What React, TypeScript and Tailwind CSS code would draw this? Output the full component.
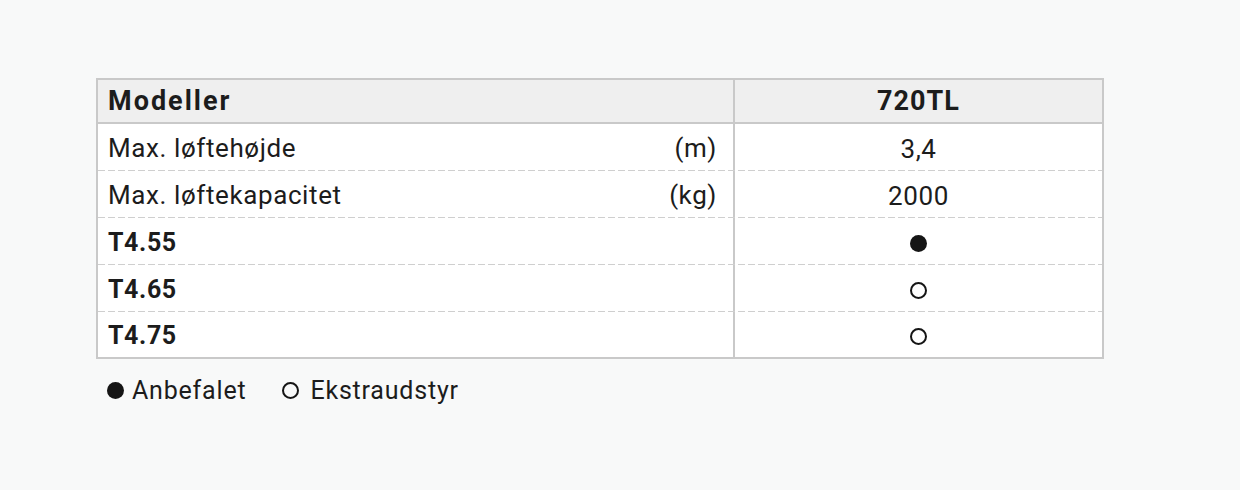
const rows = [
  { label: "Max. løftehøjde", unit: "(m)", value: "3,4", bold: false },
  { label: "Max. løftekapacitet", unit: "(kg)", value: "2000", bold: false },
  { label: "T4.55", unit: "", value: "full", bold: true },
  { label: "T4.65", unit: "", value: "empty", bold: true },
  { label: "T4.75", unit: "", value: "empty", bold: true },
]

function Dot({ filled }: { filled: boolean }) {
  return filled ? (
    <span className="inline-block w-[17px] h-[17px] rounded-full bg-[#151515]" />
  ) : (
    <span className="inline-block w-[17px] h-[17px] rounded-full border-2 border-[#151515]" />
  )
}

function App() {
  return (
    <div className="w-[1240px] h-[490px] bg-[#f8f9f9] pt-[78px] pl-[96px] font-['Roboto',sans-serif] text-[#1c1c1c]">
      <div className="w-[1008px] border-2 border-[#c9c9c9] bg-white">
        <div className="flex h-[44px] bg-[#efefef] border-b-2 border-[#c9c9c9]">
          <div className="w-[635px] flex items-center pl-[10px] text-[27px] font-bold tracking-[2px]">Modeller</div>
          <div className="w-[2px] bg-[#c9c9c9]" />
          <div className="flex-1 flex items-center justify-center text-[27px] font-bold tracking-[1px]">720TL</div>
        </div>
        {rows.map((r, i) => (
          <div key={r.label} className="relative flex h-[47px] last:h-[45px]">
            <div className="w-[635px] flex items-center justify-between pl-[10px] pr-[16px] pt-[2px] text-[26px] tracking-[0.6px]">
              <span className={r.bold ? "font-bold text-[25px]" : ""}>{r.label}</span>
              <span>{r.unit}</span>
            </div>
            <div className="w-[2px] bg-[#c9c9c9]" />
            <div className="flex-1 flex items-center justify-center pt-[3px] text-[26px] tracking-[0.6px]">
              {r.value === "full" ? <Dot filled /> : r.value === "empty" ? <Dot filled={false} /> : r.value}
            </div>
            {i < rows.length - 1 && (
              <div className="absolute left-0 right-0 bottom-0 h-px bg-[repeating-linear-gradient(90deg,#cfcfcf_0_7px,transparent_7px_10px)]" />
            )}
          </div>
        ))}
      </div>
      <div className="flex items-center mt-[13px] pl-[11px] text-[25px] tracking-[0.8px]">
        <Dot filled />
        <span className="ml-[8px]">Anbefalet</span>
        <span className="ml-[36px] flex"><Dot filled={false} /></span>
        <span className="ml-[11px]">Ekstraudstyr</span>
      </div>
    </div>
  )
}

export default App
